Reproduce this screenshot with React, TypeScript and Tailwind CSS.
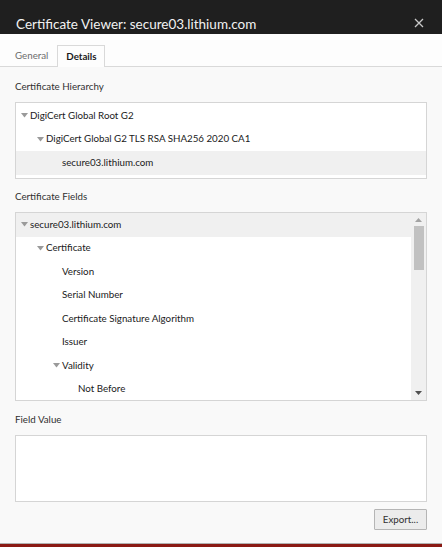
import React from "react";

const Arrow = () => (
  <svg width="7" height="5" viewBox="0 0 7 5" className="shrink-0">
    <path d="M0 0 L7 0 L3.5 4.5 Z" fill="#9a9a9a" />
  </svg>
);

type Row = { label: string; level: number; arrow?: boolean; selected?: boolean };

const TreeRow = ({ r }: { r: Row }) => (
  <div
    className={`flex items-center h-[23.5px] ${r.selected ? "bg-[#f0f0f0]" : ""}`}
    style={{ paddingLeft: 5 + r.level * 16 }}
  >
    <div className="w-[9px] flex items-center">{r.arrow ? <Arrow /> : null}</div>
    <span className="text-[9.75px] text-[#1a1a1a] leading-none">{r.label}</span>
  </div>
);

export default function App() {
  const hierarchy: Row[] = [
    { label: "DigiCert Global Root G2", level: 0, arrow: true },
    { label: "DigiCert Global G2 TLS RSA SHA256 2020 CA1", level: 1, arrow: true },
    { label: "secure03.lithium.com", level: 2, selected: true },
  ];
  const fields: Row[] = [
    { label: "secure03.lithium.com", level: 0, arrow: true, selected: true },
    { label: "Certificate", level: 1, arrow: true },
    { label: "Version", level: 2 },
    { label: "Serial Number", level: 2 },
    { label: "Certificate Signature Algorithm", level: 2 },
    { label: "Issuer", level: 2 },
    { label: "Validity", level: 2, arrow: true },
    { label: "Not Before", level: 3 },
  ];
  return (
    <div
      className="w-[442px] h-[547px] flex flex-col bg-[#f9f9f9] overflow-hidden"
      style={{ fontFamily: 'Lato, "Noto Sans", sans-serif' }}
    >
      <div className="h-[34px] bg-[#1f1f1f] flex items-start justify-between pt-[17px] pl-[16px] pr-[18px] shrink-0">
        <span className="text-[13.5px] text-[#f2f2f2] leading-[14px]">Certificate Viewer: secure03.lithium.com</span>
        <svg width="10" height="10" viewBox="0 0 10 10" className="mt-[1px]">
          <path d="M1 1 L9 9 M9 1 L1 9" stroke="#c8c8c8" strokeWidth="1.3" />
        </svg>
      </div>
      <div className="h-[33px] bg-[#fdfdfd] border-b border-[#d9d9d9] flex items-end pl-[15px] shrink-0">
        <div className="h-[21px] flex items-center pr-[9px] text-[9.75px] text-[#6d6d6d]">General</div>
        <div className="h-[22px] mb-[-1px] w-[48px] flex items-center justify-center bg-[#fdfdfd] border border-b-0 border-[#d9d9d9] text-[9.75px] font-bold text-[#1a1a1a]">
          Details
        </div>
      </div>
      <div className="flex-1 flex flex-col px-[15px]">
        <div className="h-[35px] flex items-center text-[9.75px] text-[#303030] pt-[3px]">Certificate Hierarchy</div>
        <div className="h-[77px] bg-white border border-[#d5d5d5] pt-[1px]">
          {hierarchy.map((r) => (
            <TreeRow key={r.label} r={r} />
          ))}
        </div>
        <div className="h-[33px] flex items-center text-[9.75px] text-[#303030] pt-[1px]">Certificate Fields</div>
        <div className="h-[189px] bg-white border border-[#d5d5d5] flex">
          <div className="flex-1 overflow-hidden">
            {fields.map((r, i) => (
              <TreeRow key={r.label + i} r={r} />
            ))}
          </div>
          <div className="w-[15px] bg-[#f0f0f0] flex flex-col items-center">
            <div className="h-[13px] flex items-center justify-center">
              <svg width="7" height="4" viewBox="0 0 7 4">
                <path d="M0 4 L7 4 L3.5 0 Z" fill="#a3a3a3" />
              </svg>
            </div>
            <div className="w-[10px] h-[44px] bg-[#c1c1c1]" />
            <div className="flex-1" />
            <div className="h-[14px] flex items-center justify-center">
              <svg width="7" height="4" viewBox="0 0 7 4">
                <path d="M0 0 L7 0 L3.5 4 Z" fill="#505050" />
              </svg>
            </div>
          </div>
        </div>
        <div className="h-[34px] flex items-center text-[9.75px] text-[#303030] pt-[3px]">Field Value</div>
        <div className="h-[67px] bg-white border border-[#d5d5d5]" />
        <div className="flex justify-end mt-[7px]">
          <div className="w-[53px] h-[21px] border border-[#b5b5b5] bg-[#ececec] flex items-center justify-center text-[9.75px] text-[#303030] rounded-[1px]">
            Export...
          </div>
        </div>
      </div>
      <div className="h-[1px] bg-[#b0b0b0] shrink-0" />
      <div className="h-[3px] bg-[#8a1a14] shrink-0" />
    </div>
  );
}
